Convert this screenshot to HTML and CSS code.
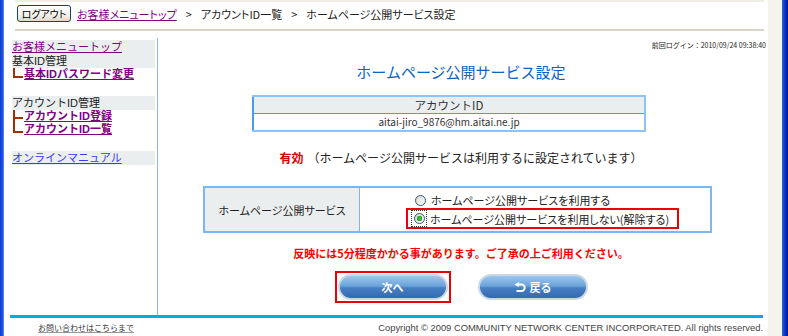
FILE: index.html
```html
<!DOCTYPE html>
<html lang="ja">
<head>
    <meta charset="UTF-8">
    <title>ホームページ公開サービス設定</title>
    <link rel="stylesheet" href="styles.css">
</head>
<body>
<div class="window">
    <div class="frame-left"></div>
    <div class="page">
        <header class="topbar">
            <button class="btn-logout">ログアウト</button>
            <nav class="crumbs">
                <a href="#">お客様メニュートップ</a>
                <span class="sep">&gt;</span>
                <span>アカウントID一覧</span>
                <span class="sep">&gt;</span>
                <span>ホームページ公開サービス設定</span>
            </nav>
        </header>

        <div class="main">
            <aside class="side">
                <div class="side-row"><a href="#">お客様メニュートップ</a></div>
                <div class="side-row">基本ID管理</div>
                <div class="side-sub"><span class="branch elbow"></span><a href="#">基本IDパスワード変更</a></div>

                <div class="side-row side-gap">アカウントID管理</div>
                <div class="side-sub"><span class="branch tee"></span><a href="#">アカウントID登録</a></div>
                <div class="side-sub"><span class="branch elbow"></span><a href="#">アカウントID一覧</a></div>

                <div class="side-row side-gap"><a href="#" class="manual">オンラインマニュアル</a></div>
            </aside>

            <section class="content">
                <div class="last-login">前回ログイン：2010/09/24 09:38:40</div>
                <h1 class="title">ホームページ公開サービス設定</h1>

                <table class="account">
                    <tr><th>アカウントID</th></tr>
                    <tr><td>aitai-jiro_9876@hm.aitai.ne.jp</td></tr>
                </table>

                <p class="status"><strong>有効</strong>（ホームページ公開サービスは利用するに設定されています）</p>

                <table class="settings">
                    <tr>
                        <th>ホームページ公開サービス</th>
                        <td>
                            <div class="choice"><span class="radio"></span>ホームページ公開サービスを利用する</div>
                            <div class="choice picked">
                                <span class="focus"><span class="radio on"></span></span>ホームページ公開サービスを利用しない(解除する)
                            </div>
                        </td>
                    </tr>
                </table>

                <p class="notice">反映には5分程度かかる事があります。ご了承の上ご利用ください。</p>

                <div class="actions">
                    <div class="mark"><a href="#" class="pill">次へ</a></div>
                    <a href="#" class="pill">
                        <svg width="12" height="11" viewBox="0 0 12 11">
                            <polygon points="0.5,2.5 5,0 5,5" fill="#fff"/>
                            <path d="M4 2.5 H7.5 A3.2 3.2 0 0 1 7.5 8.9 H2.5" stroke="#fff" stroke-width="2" fill="none"/>
                        </svg>
                        戻る
                    </a>
                </div>
            </section>
        </div>

        <footer class="foot">
            <a href="#">お問い合わせはこちらまで</a>
            <span class="copy">Copyright &copy; 2009 COMMUNITY NETWORK CENTER INCORPORATED. All rights reserved.</span>
        </footer>
    </div>
    <div class="scrollbar"></div>
    <div class="frame-right"></div>
</div>
</body>
</html>
```

FILE: styles.css
```css
body {
    margin: 0;
    font-family: "Noto Sans CJK JP", "Liberation Sans", sans-serif;
    font-size: 12px;
    color: #222;
    background-color: #fff;
}
.window {
    display: flex;
    width: 788px;
    height: 336px;
    overflow: hidden;
}
.frame-left {
    width: 4px;
    background: linear-gradient(to right, #0b3bd0, #2157e4 70%, #7d96d8);
}
.frame-right {
    width: 6px;
    background: linear-gradient(to right, #2a62ea, #0a34c4 50%, #00188c);
}
.scrollbar {
    width: 14px;
    background-color: #f4f3ee;
}
.page {
    width: 764px;
    display: flex;
    flex-direction: column;
}

/* header */
.topbar {
    margin-left: 11px;
    width: 749px;
    height: 31px;
    box-sizing: border-box;
    border-top: 2px solid #efede4;
    border-bottom: 2px solid #d7d3c6;
    padding-top: 3px;
    display: flex;
    align-items: flex-start;
}
.btn-logout {
    margin-left: 2px;
    width: 54px;
    height: 17px;
    padding: 0;
    border: 1px solid #1d3f6e;
    border-radius: 3px;
    background: linear-gradient(#ffffff, #f3f2ec 60%, #dcd9cd);
    font-family: "Noto Sans CJK JP", sans-serif;
    font-size: 10px;
    line-height: 15px;
    font-feature-settings: "palt";
    color: #000;
}
.crumbs {
    margin-left: 6px;
    height: 17px;
    display: flex;
    align-items: center;
    font-size: 11px;
    font-feature-settings: "palt";
    color: #222;
}
.crumbs a {
    color: #800080;
}
.crumbs .sep {
    margin: 0 9px;
}

/* body */
.main {
    display: flex;
    height: 284px;
    box-sizing: border-box;
    padding-top: 7px;
}
.side {
    margin-left: 6px;
    width: 143px;
    padding: 2px 2px 0;
    border-right: 1px solid #86b8ef;
    font-family: "Liberation Sans", "Noto Sans CJK JP", sans-serif;
    font-size: 11px;
}
.side a {
    color: #800080;
}
.side-row {
    background-color: #ebeeee;
    height: 14px;
    line-height: 14px;
    color: #222;
}
.side-gap {
    margin-top: 15px;
}
.side-sub {
    height: 13px;
    line-height: 13px;
    font-weight: bold;
    display: flex;
}
.branch {
    width: 11px;
    height: 13px;
    margin-left: 1px;
    flex: none;
}
.branch.elbow {
    background:
        linear-gradient(#a03000, #a03000) 0 0 / 2px 10px no-repeat,
        linear-gradient(#a03000, #a03000) 0 8px / 10px 2px no-repeat;
}
.branch.tee {
    background:
        linear-gradient(#a03000, #a03000) 0 0 / 2px 13px no-repeat,
        linear-gradient(#a03000, #a03000) 0 7px / 10px 2px no-repeat;
}
.side a.manual {
    color: #3a3af0;
    font-weight: normal;
}

.content {
    flex: 1;
    margin-right: 4px;
    display: flex;
    flex-direction: column;
    align-items: center;
}
.last-login {
    align-self: flex-end;
    margin: 2px -2px 0 0;
    font-size: 7px;
    line-height: 10px;
    color: #222;
}
.title {
    margin: 13px 0 0;
    font-size: 15px;
    font-weight: normal;
    line-height: 18px;
    color: #0a64c8;
}
.account {
    align-self: flex-start;
    margin: 14px 0 0 94px;
    width: 394px;
    border-collapse: collapse;
    border: 2px solid #8ec3f7;
    border-left-color: #4a9af0;
}
.account th, .account td {
    border: 1px solid #4a9af0;
    height: 16px;
    padding: 0;
    line-height: 16px;
    text-align: center;
    font-weight: normal;
    color: #333;
}
.account th {
    background-color: #ebeeee;
    font-size: 11.5px;
}
.account td {
    font-size: 10px;
}
.status {
    margin: 18px 0 0;
    line-height: 16px;
    color: #222;
}
.status strong {
    color: #dd0000;
    margin-right: 4px;
}
.settings {
    align-self: flex-start;
    margin: 20px 0 0 45px;
    width: 509px;
    border-collapse: collapse;
    border: 2px solid #7ab7f4;
}
.settings th {
    width: 154px;
    background-color: #ebeeee;
    border-right: 1px solid #7ab7f4;
    font-size: 11px;
    font-weight: normal;
    font-feature-settings: "palt";
    padding: 0;
}
.settings td {
    padding: 5px 0 2px 46px;
}
.choice {
    display: flex;
    align-items: center;
    height: 14px;
    padding-left: 9px;
    font-size: 11px;
    font-feature-settings: "palt";
}
.choice.picked {
    width: max-content;
    height: 17px;
    margin-top: 1px;
    padding: 0 8px 0 3px;
    border: 2px solid #ee0000;
}
.radio {
    width: 11px;
    height: 11px;
    box-sizing: border-box;
    border: 1px solid #2a5a88;
    border-radius: 50%;
    background: linear-gradient(135deg, #d8d6cc, #ffffff);
    margin-right: 5px;
    flex: none;
}
.focus {
    display: flex;
    border: 1px dotted #333;
    padding: 2px 0 2px 2px;
    margin-right: 3px;
}
.focus .radio {
    margin-right: 1px;
}
.radio.on {
    background:
        radial-gradient(circle, #52c552 0, #21a121 2.5px, transparent 3px),
        linear-gradient(135deg, #d8d6cc, #ffffff);
}
.notice {
    margin: 13px 0 0;
    line-height: 14px;
    font-size: 11px;
    font-weight: bold;
    color: #ff0000;
}
.actions {
    margin-top: 11px;
    display: flex;
    align-items: center;
    gap: 27px;
}
.mark {
    border: 2px solid #ee0000;
    padding: 1px;
    display: flex;
}
.pill {
    width: 110px;
    height: 26px;
    box-sizing: border-box;
    border: 2px solid #cbd8e4;
    border-radius: 13px;
    background: linear-gradient(#9cc7ed, #6aa2d9 46%, #477fc4 54%, #3469af);
    color: #fff;
    font-size: 11px;
    font-weight: bold;
    text-decoration: none;
    display: flex;
    align-items: center;
    justify-content: center;
    gap: 4px;
}

/* footer */
.foot {
    margin-left: 6px;
    width: 753px;
    height: 21px;
    box-sizing: border-box;
    border-top: 3px solid #00aae8;
    padding-left: 28px;
    display: flex;
    align-items: center;
    justify-content: space-between;
}
.foot a {
    font-size: 8px;
    color: #333;
    text-decoration-color: #999;
}
.copy {
    font-family: "Liberation Sans", sans-serif;
    font-size: 9.4px;
    color: #444;
}
```
